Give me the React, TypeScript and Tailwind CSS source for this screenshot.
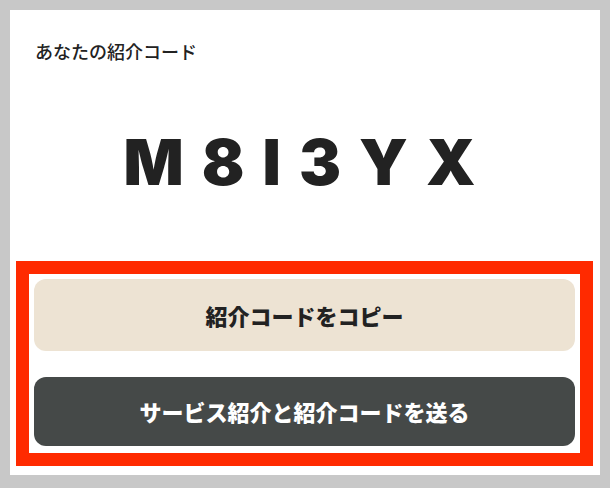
export default function App() {
  return (
    <div className="w-[610px] h-[488px] bg-[#c8c8c8] pt-[10px] px-[10px] overflow-hidden" style={{ fontFamily: '"Noto Sans CJK JP", "Noto Sans", sans-serif' }}>
      <div className="h-[465px] bg-white flex flex-col pl-[6px] pr-[7px] pb-[9px]">
        <div className="pt-[29px] pl-[19px] h-[64px] text-[18px] leading-[24px] font-medium text-[#222]">
          あなたの紹介コード
        </div>
        <div className="flex-1 flex items-center justify-center pb-[10px]">
          <div
            className="text-[63px] leading-none font-black text-[#222] tracking-[18px] pl-[8px]"
            style={{ fontFamily: 'Inter, "Liberation Sans", sans-serif' }}
          >
            M8I3YX
          </div>
        </div>
        <div className="border-[13px] border-[#ff2a00] pt-[5px] pb-[7px] px-[5px] flex flex-col gap-[26px]">
          <button className="h-[72px] rounded-[12px] bg-[#ede3d3] text-[#222] text-[22px] font-black flex items-center justify-center">
            紹介コードをコピー
          </button>
          <button className="h-[69px] rounded-[12px] bg-[#454948] text-white text-[22px] font-black flex items-center justify-center">
            サービス紹介と紹介コードを送る
          </button>
        </div>
      </div>
    </div>
  );
}
